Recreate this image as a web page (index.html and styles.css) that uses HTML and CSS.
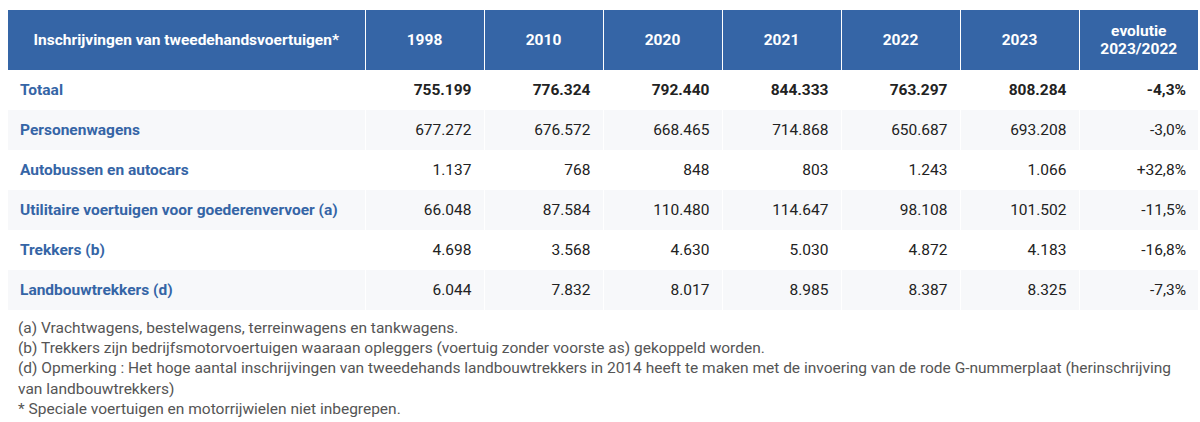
FILE: index.html
```html
<!DOCTYPE html>
<html lang="nl">
<head>
<meta charset="utf-8">
<link rel="stylesheet" href="styles.css">
</head>
<body>
<div class="wrap">
<table class="stats">
<colgroup>
<col class="c-label"><col class="c-num"><col class="c-num"><col class="c-num"><col class="c-num"><col class="c-num"><col class="c-num"><col class="c-evo">
</colgroup>
<thead>
<tr>
<th>Inschrijvingen van tweedehandsvoertuigen*</th>
<th>1998</th><th>2010</th><th>2020</th><th>2021</th><th>2022</th><th>2023</th>
<th class="evo">evolutie<br>2023/2022</th>
</tr>
</thead>
<tbody>
<tr class="total">
<td class="label">Totaal</td><td>755.199</td><td>776.324</td><td>792.440</td><td>844.333</td><td>763.297</td><td>808.284</td><td>-4,3%</td>
</tr>
<tr class="alt">
<td class="label">Personenwagens</td><td>677.272</td><td>676.572</td><td>668.465</td><td>714.868</td><td>650.687</td><td>693.208</td><td>-3,0%</td>
</tr>
<tr>
<td class="label">Autobussen en autocars</td><td>1.137</td><td>768</td><td>848</td><td>803</td><td>1.243</td><td>1.066</td><td>+32,8%</td>
</tr>
<tr class="alt">
<td class="label">Utilitaire voertuigen voor goederenvervoer (a)</td><td>66.048</td><td>87.584</td><td>110.480</td><td>114.647</td><td>98.108</td><td>101.502</td><td>-11,5%</td>
</tr>
<tr>
<td class="label">Trekkers (b)</td><td>4.698</td><td>3.568</td><td>4.630</td><td>5.030</td><td>4.872</td><td>4.183</td><td>-16,8%</td>
</tr>
<tr class="alt">
<td class="label">Landbouwtrekkers (d)</td><td>6.044</td><td>7.832</td><td>8.017</td><td>8.985</td><td>8.387</td><td>8.325</td><td>-7,3%</td>
</tr>
</tbody>
</table>
<div class="notes">
<p>(a) Vrachtwagens, bestelwagens, terreinwagens en tankwagens.</p>
<p>(b) Trekkers zijn bedrijfsmotorvoertuigen waaraan opleggers (voertuig zonder voorste as) gekoppeld worden.</p>
<p>(d) Opmerking : Het hoge aantal inschrijvingen van tweedehands landbouwtrekkers in 2014 heeft te maken met de invoering van de rode G-nummerplaat (herinschrijving van landbouwtrekkers)</p>
<p>* Speciale voertuigen en motorrijwielen niet inbegrepen.</p>
</div>
</div>
</body>
</html>
```
FILE: styles.css
```css
html, body {
  margin: 0;
  padding: 0;
  background: #ffffff;
}
body {
  font-family: Roboto, "Liberation Sans", Arial, sans-serif;
  color: #222222;
}
.wrap {
  padding: 10px 2px 0 8px;
}
.stats {
  width: 1190px;
  border-collapse: collapse;
  table-layout: fixed;
}
.c-label { width: 357px; }
.c-num { width: 119px; }
.c-evo { width: 119px; }
.stats th {
  background: #3565a6;
  color: #ffffff;
  font-weight: 700;
  font-size: 15.5px;
  line-height: 18px;
  height: 60px;
  padding: 0 6px;
  text-align: center;
  border: 1px solid #ffffff;
  border-top: none;
  border-bottom: none;
  box-sizing: border-box;
}
.stats th:first-child { border-left: none; }
.stats th:last-child { border-right: none; }
.stats td {
  height: 40px;
  padding: 0 12px 0 12px;
  font-size: 15.5px;
  text-align: right;
  border: 1px solid #ffffff;
  border-top: none;
  border-bottom: none;
  box-sizing: border-box;
  color: #222222;
}
.stats td:first-child { border-left: none; }
.stats td:last-child { border-right: none; }
.stats td.label {
  text-align: left;
  color: #3565a6;
  font-weight: 700;
}
.stats tr.total td { font-weight: 700; }
.stats tr.alt td { background: #f7f8fa; }
.notes {
  padding: 8px 10px 0 10px;
  color: #555555;
  font-size: 15.5px;
  line-height: 20.2px;
}
.notes p { margin: 0; }
```
